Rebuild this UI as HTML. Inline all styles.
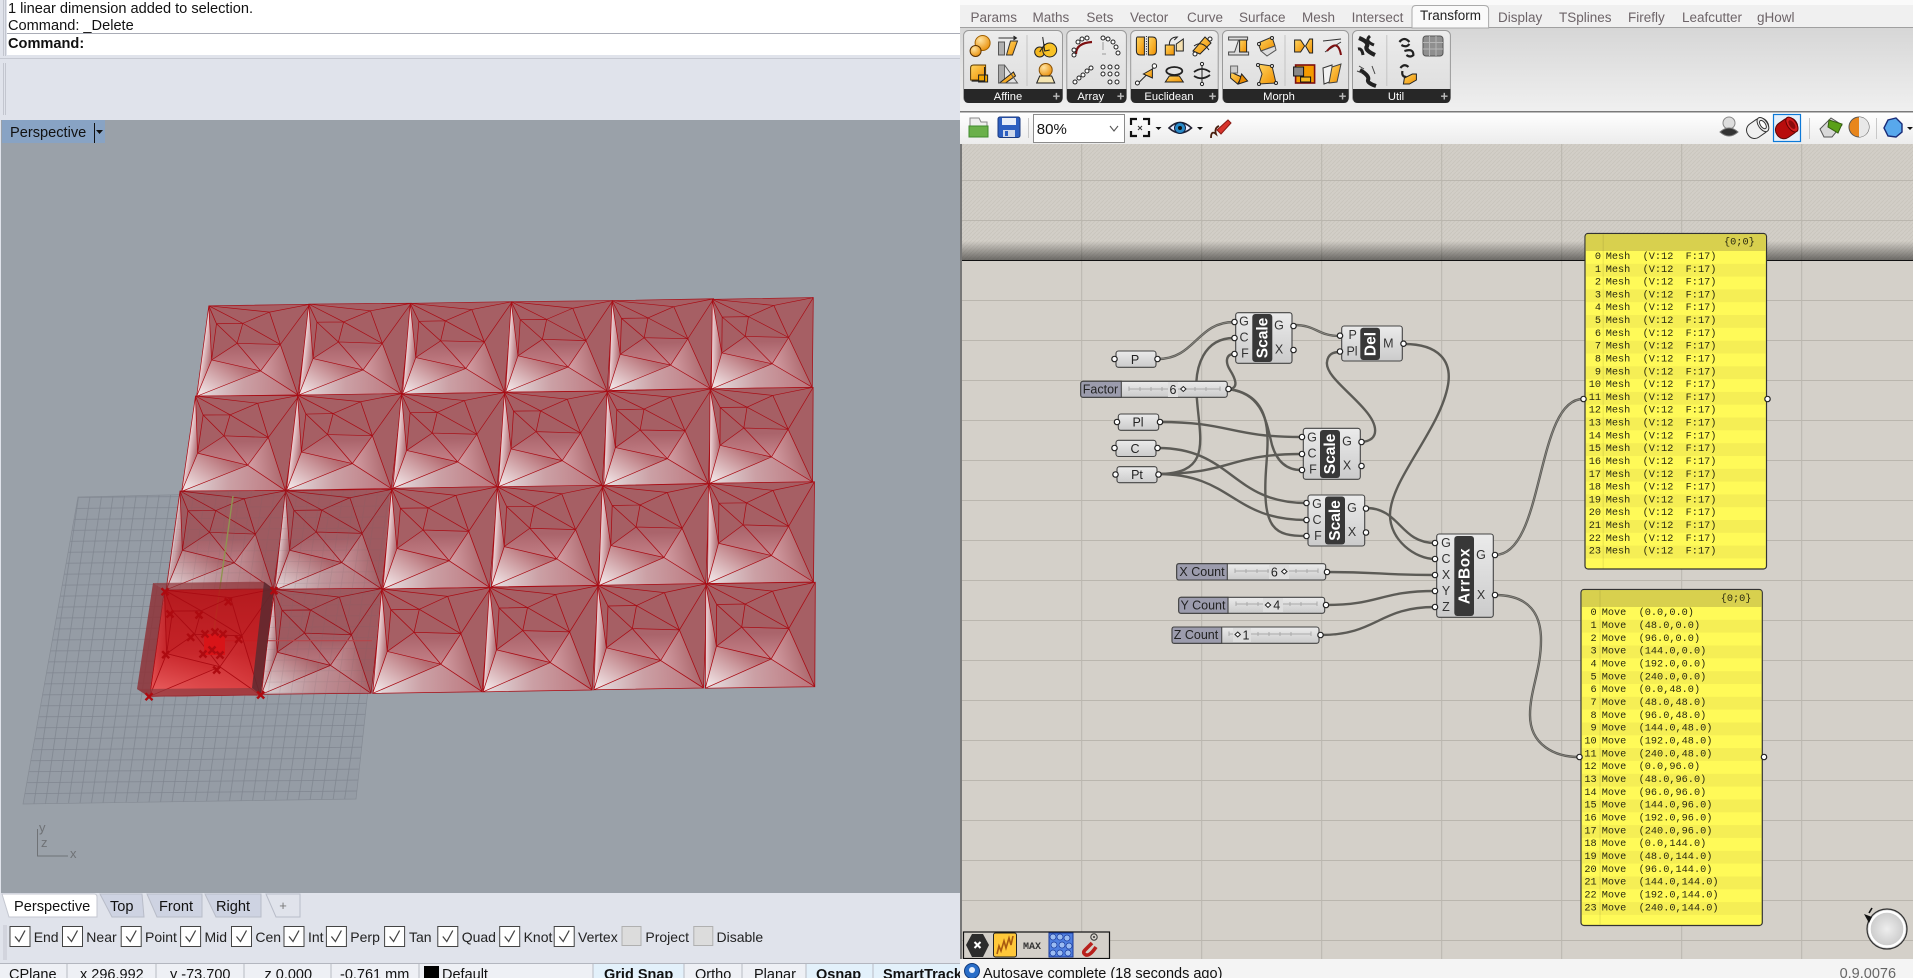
<!DOCTYPE html>
<html><head><meta charset="utf-8"><title>Rhino Grasshopper</title>
<style>
html,body{margin:0;padding:0;background:#e0e3eb;overflow:hidden;width:1913px;height:978px}
svg{position:absolute;left:0;top:0;display:block}
text{font-family:"Liberation Sans",Arial,sans-serif;white-space:pre}
.m{font-family:"Liberation Mono","Courier New",monospace;font-size:10.25px;fill:#2a2a10}
.ui{font-size:14.6px;fill:#111}
.tab{font-size:13.5px;fill:#6d6468}
.c{font-size:12.5px;fill:#333;text-anchor:middle}
.s{font-size:12.5px;fill:#222;text-anchor:middle}
.b{font-size:15.5px;font-weight:bold;fill:#fff;text-anchor:middle}
.f{font-size:11.2px;fill:#fff;text-anchor:middle}
.p{font-size:13px;fill:#bbb;font-weight:bold;text-anchor:middle}
.o{font-size:14px;fill:#222}
.st{font-size:14.5px;fill:#111}
.w{fill:none;stroke:#5c5b56;stroke-width:2.4}
.d{fill:none;stroke:#8f8d87;stroke-width:.7}
.i{stroke:#222;stroke-width:1}
</style></head><body>
<svg width="1913" height="978" viewBox="0 0 1913 978" xmlns="http://www.w3.org/2000/svg">
<defs>
<linearGradient id="g1" gradientUnits="userSpaceOnUse" x1="0" y1="100" x2="100" y2="92"><stop offset="0" stop-color="#e6e2e4"/><stop offset=".45" stop-color="#cba0a5"/><stop offset="1" stop-color="#bb757c"/></linearGradient>
<linearGradient id="g2" gradientUnits="userSpaceOnUse" x1="33" y1="62" x2="8" y2="98"><stop offset="0" stop-color="#b56c72"/><stop offset="1" stop-color="#eedfe1"/></linearGradient>
<linearGradient id="g3" gradientUnits="userSpaceOnUse" x1="33" y1="45" x2="33" y2="75"><stop offset="0" stop-color="#aa646b"/><stop offset="1" stop-color="#c68289"/></linearGradient>
<linearGradient id="g4" gradientUnits="userSpaceOnUse" x1="60" y1="48" x2="60" y2="74"><stop offset="0" stop-color="#aa646b"/><stop offset="1" stop-color="#c8878e"/></linearGradient>
<linearGradient id="g5" gradientUnits="userSpaceOnUse" x1="62" y1="70" x2="95" y2="62"><stop offset="0" stop-color="#d09aa0"/><stop offset="1" stop-color="#a65f64"/></linearGradient>
<linearGradient id="g6" gradientUnits="userSpaceOnUse" x1="0" y1="60" x2="10" y2="60"><stop offset="0" stop-color="#eed5d8"/><stop offset="1" stop-color="#aa646a"/></linearGradient>
<linearGradient id="sel" gradientUnits="userSpaceOnUse" x1="0" y1="590" x2="0" y2="696"><stop offset="0" stop-color="#b80e12" stop-opacity=".84"/><stop offset=".6" stop-color="#cc1418" stop-opacity=".8"/><stop offset="1" stop-color="#ea2e2e" stop-opacity=".72"/></linearGradient>
<linearGradient id="sh" x1="0" y1="0" x2="0" y2="1"><stop offset="0" stop-color="#000" stop-opacity="0"/><stop offset="1" stop-color="#000" stop-opacity=".48"/></linearGradient>
<linearGradient id="rb" x1="0" y1="0" x2="0" y2="1"><stop offset="0" stop-color="#d6d6d6"/><stop offset="1" stop-color="#f0f0f0"/></linearGradient>
<linearGradient id="tb" x1="0" y1="0" x2="0" y2="1"><stop offset="0" stop-color="#fff"/><stop offset="1" stop-color="#ececec"/></linearGradient>
<linearGradient id="pn" x1="0" y1="0" x2="0" y2="1"><stop offset="0" stop-color="#ececec"/><stop offset="1" stop-color="#dcdcdc"/></linearGradient>
<linearGradient id="cp" x1="0" y1="0" x2="0" y2="1"><stop offset="0" stop-color="#ebebeb"/><stop offset="1" stop-color="#cbcbcb"/></linearGradient>
<linearGradient id="or" x1="0" y1="0" x2="1" y2="1"><stop offset="0" stop-color="#ffd561"/><stop offset="1" stop-color="#ef8f00"/></linearGradient>
<radialGradient id="sp" cx=".35" cy=".3" r=".8"><stop offset="0" stop-color="#ffe3a0"/><stop offset="1" stop-color="#e88a00"/></radialGradient>
<radialGradient id="cm" cx=".5" cy=".5" r=".55"><stop offset="0" stop-color="#eee"/><stop offset="1" stop-color="#c2c2c2"/></radialGradient>
<pattern id="gr" patternUnits="userSpaceOnUse" width="11" height="11" patternTransform="matrix(1.045 -.008 -.1445 .997 78 497)">
<rect width="11" height="11" fill="#959ca5"/><path d="M0 .4H11M.4 0V11" stroke="#7f858f" stroke-width=".7" fill="none"/></pattern>
<pattern id="gr2" patternUnits="userSpaceOnUse" width="11" height="11" patternTransform="matrix(1.045 -.008 -.1445 .997 78 497)">
<path d="M0 .4H11M.4 0V11" stroke="#6b5f66" stroke-width=".7" fill="none"/></pattern>
<pattern id="ht" patternUnits="userSpaceOnUse" width="4" height="4"><rect width="4" height="4" fill="#d2cec7"/><path d="M0 4L4 0" stroke="#c8c4bc" stroke-width=".8"/></pattern>
<clipPath id="gc"><polygon points="78,497 390,490 356,799 23,804"/></clipPath>
<clipPath id="gm"><polygon points="180.7,491 390,490 371.7,693.3 260.7,695 274,590 165,590"/></clipPath>
<path id="l" fill="none" stroke="#a80c14" stroke-width=".72" d="M0 0H100V100H0ZM0 0L61 8L100 0M0 0L36 20L76 44M61 8L36 20M61 8L76 44M76 44L100 0M76 44L100 100M76 44L60 73M76 44L33 42M36 20L33 42M36 20H10L0 0M10 20L10 60M10 20L33 42M33 42L10 60M33 42L60 73M10 60L60 73M10 60L0 0M10 60L0 100L60 73L100 100"/>
<g id="c">
<rect width="100" height="100" fill="#a65f64"/>
<polygon points="0,100 60,73 100,100" fill="url(#g1)"/>
<polygon points="0,100 10,60 60,73" fill="url(#g2)"/>
<polygon points="10,60 33,42 60,73" fill="url(#g3)"/>
<polygon points="33,42 76,44 60,73" fill="url(#g4)"/>
<polygon points="60,73 76,44 100,100" fill="url(#g5)"/>
<polygon points="0,0 10,60 0,100" fill="url(#g6)"/>
<use href="#l"/>
</g>
<path id="x" d="M-3.5 -3.5L3.5 3.5M3.5 -3.5L-3.5 3.5" stroke="#ae0a10" stroke-width="2.4" fill="none"/>
<circle id="k" r="2.7" fill="#fff" stroke="#222" stroke-width="1.2"/>
<g id="chk"><rect width="20" height="20" fill="#fff" stroke="#444" stroke-width="1"/><path d="M5 10L9 15L15 4" stroke="#444" stroke-width="1.3" fill="none"/></g>
</defs>

<!-- left panel -->
<rect width="961" height="978" fill="#e0e3eb"/>
<rect x="7" y="0" width="953" height="55" fill="#fff"/>
<rect x="7" y="33" width="953" height="1" fill="#a9acb6"/>
<rect x="0" y="58" width="960" height="1" fill="#c6c9d2"/>
<path d="M3.5 0V56M5.5 0V56M3.5 63V115M5.5 63V115" stroke="#c3c6cf" fill="none"/>
<text x="8" y="13" class="ui">1 linear dimension added to selection.</text>
<text x="8" y="30" class="ui">Command: _Delete</text>
<text x="8" y="48" class="ui" font-weight="bold">Command:</text>

<!-- viewport -->
<rect x="1" y="120" width="959" height="773" fill="#9aa1a9"/>
<rect x="2" y="120" width="103" height="23" fill="#88a3c4"/>
<text x="10" y="137" class="ui">Perspective</text>
<rect x="94" y="123" width="1" height="20" fill="#111"/>
<polygon points="96,130 103,130 99.5,134" fill="#111"/>

<rect x="0" y="480" width="430" height="340" fill="url(#gr)" clip-path="url(#gc)"/>
<polygon points="78,497 390,490 356,799 23,804" fill="none" stroke="#858b94" stroke-width=".7"/>

<use href="#c" transform="matrix(1.0115 -.015 -.1215 .905 208.8 305.8)"/>
<use href="#c" transform="matrix(1.0255 -.0085 -.0985 .9085 308.7 304.1)"/>
<use href="#c" transform="matrix(1.02 -.0165 -.077 .9065 410.2 303.3)"/>
<use href="#c" transform="matrix(1.0165 -.0115 -.0565 .9045 511.2 301.7)"/>
<use href="#c" transform="matrix(1.017 -.0185 -.033 .8985 612 300.6)"/>
<use href="#c" transform="matrix(1.01 -.017 -.01 .897 712.3 299.3)"/>
<use href="#c" transform="matrix(1.038 -.0065 -.138 .9535 195.5 396)"/>
<use href="#c" transform="matrix(1.0485 -.017 -.1115 .95 297.6 395.2)"/>
<use href="#c" transform="matrix(1.0435 -.0165 -.0865 .9435 401.4 394)"/>
<use href="#c" transform="matrix(1.0385 -.0115 -.0615 .9455 504.4 392.3)"/>
<use href="#c" transform="matrix(1.0465 -.0235 -.0335 .9465 607 391)"/>
<use href="#c" transform="matrix(1.0315 -.0135 -.0055 .9465 710 388.7)"/>
<use href="#c" transform="matrix(1.0715 -.005 -.1385 .988 180 491)"/>
<use href="#c" transform="matrix(1.0715 -.0135 -.1085 .9965 285.4 490.6)"/>
<use href="#c" transform="matrix(1.067 -.0165 -.087 1.0065 391.5 488.3)"/>
<use href="#c" transform="matrix(1.0665 -.015 -.0605 1.001 497.2 486.7)"/>
<use href="#c" transform="matrix(1.0715 -.02 -.0355 1 602.2 485.7)"/>
<use href="#c" transform="matrix(1.06 -.015 -.01 1.002 708.5 483.3)"/>
<use href="#c" transform="matrix(1.1035 -.012 -.1465 1.062 164.4 590)"/>
<use href="#c" transform="matrix(1.0965 -.01 -.1195 1.05 273.4 589.3)"/>
<use href="#c" transform="matrix(1.0935 -.0165 -.0895 1.0435 381.7 589)"/>
<use href="#c" transform="matrix(1.0915 -.0185 -.0645 1.0455 489.5 587.3)"/>
<use href="#c" transform="matrix(1.0965 -.018 -.0395 1.045 597.8 585.3)"/>
<use href="#c" transform="matrix(1.095 -.015 -.005 1.045 705.8 583.7)"/>

<!-- grid seen through mesh -->
<g clip-path="url(#gm)"><rect x="150" y="480" width="250" height="220" fill="#50303a" opacity=".09"/><rect x="150" y="480" width="250" height="220" fill="url(#gr2)" opacity=".18"/></g>
<line x1="233" y1="496" x2="214" y2="630" stroke="#8f9350" stroke-width="1.4"/>
<line x1="220" y1="640.7" x2="372" y2="640.7" stroke="#b5454a" stroke-width="1.2"/>

<!-- selected box -->
<polygon points="165,590 274,589.3 260.7,695 149,696.7" fill="url(#sel)"/>
<use href="#l" transform="matrix(1.1035 -.012 -.1465 1.062 164.4 590)"/>
<polygon points="153,583 165,590 149,696.7 137,689" fill="#8e2f34" opacity=".82"/>
<polygon points="153,583 264,581.7 274,589.3 165,590" fill="#8e2f34" opacity=".68"/>
<polygon points="264,581.7 274,589.3 260.7,695 252,688" fill="#5c2a30" opacity=".85"/>
<polygon points="137,689 252,688 260.7,695 149,696.7" fill="#8e3a40" opacity=".72"/>
<rect x="204" y="634" width="21" height="21" fill="#d81418"/>
<use href="#x" x="205" y="634"/><use href="#x" x="215" y="632"/><use href="#x" x="223" y="634"/><use href="#x" x="203" y="654"/><use href="#x" x="212" y="650"/><use href="#x" x="220" y="655"/>
<use href="#x" x="165" y="591.7"/><use href="#x" x="260.7" y="695"/><use href="#x" x="149" y="696.7"/><use href="#x" x="274" y="590.7"/><use href="#x" x="228.3" y="601.7"/><use href="#x" x="170" y="614"/><use href="#x" x="199" y="615"/><use href="#x" x="190.7" y="637.3"/><use href="#x" x="238.7" y="639.3"/><use href="#x" x="165.7" y="654.7"/><use href="#x" x="216.7" y="670"/>

<!-- axis icon -->
<path d="M37.5 829V856H68" stroke="#6f7276" stroke-width="1" fill="none"/>
<text x="39" y="832" font-size="13" fill="#6f7276">y</text><text x="41" y="847" font-size="13" fill="#6f7276">z</text><text x="70" y="858" font-size="13" fill="#6f7276">x</text>

<!-- viewport tabs -->
<rect x="0" y="893" width="960" height="85" fill="#e0e3eb"/>
<path d="M2 894H94Q97 894 97 897V917H9Z" fill="#fff" stroke="#c4c7d0"/>
<path d="M100 894H142L144 917H112Z" fill="#ced3e2" stroke="#b8bcc8"/>
<path d="M147 894H202V917H157Z" fill="#ced3e2" stroke="#b8bcc8"/>
<path d="M205 894H261V917H216Z" fill="#ced3e2" stroke="#b8bcc8"/>
<path d="M266 894H300V917H276Z" fill="#e0e3eb" stroke="#b8bcc8"/>
<text x="14" y="911" class="ui">Perspective</text><text x="110" y="911" class="ui">Top</text><text x="159" y="911" class="ui">Front</text><text x="216" y="911" class="ui">Right</text>
<text x="283" y="910" font-size="13" fill="#777" text-anchor="middle">+</text>
<path d="M4 925V960M6 925V960" stroke="#c3c6cf"/>

<!-- osnaps -->
<use href="#chk" x="10" y="926.5"/><text x="33.7" y="942" class="o">End</text>
<use href="#chk" x="62.5" y="926.5"/><text x="86.3" y="942" class="o">Near</text>
<use href="#chk" x="121.2" y="926.5"/><text x="145" y="942" class="o">Point</text>
<use href="#chk" x="180.6" y="926.5"/><text x="204.5" y="942" class="o">Mid</text>
<use href="#chk" x="231.5" y="926.5"/><text x="255.4" y="942" class="o">Cen</text>
<use href="#chk" x="284" y="926.5"/><text x="308" y="942" class="o">Int</text>
<use href="#chk" x="326.4" y="926.5"/><text x="350.3" y="942" class="o">Perp</text>
<use href="#chk" x="384.6" y="926.5"/><text x="409" y="942" class="o">Tan</text>
<use href="#chk" x="437.8" y="926.5"/><text x="461.7" y="942" class="o">Quad</text>
<use href="#chk" x="499.7" y="926.5"/><text x="523.6" y="942" class="o">Knot</text>
<use href="#chk" x="554.2" y="926.5"/><text x="578" y="942" class="o">Vertex</text>
<rect x="622" y="926.5" width="19" height="19" fill="#dcdcdc" stroke="#b0b0b0"/><text x="645.4" y="942" class="o">Project</text>
<rect x="693.8" y="926.5" width="19" height="19" fill="#dcdcdc" stroke="#b0b0b0"/><text x="716.5" y="942" class="o">Disable</text>

<!-- status bar -->
<rect x="0" y="963" width="960" height="1" fill="#b3b6bf"/>
<rect x="0" y="964" width="960" height="14" fill="#eef0f5"/>
<rect x="593" y="964" width="91" height="14" fill="#e3f1fb"/><rect x="806" y="964" width="154" height="14" fill="#e3f1fb"/>
<path d="M67 964V978M156 964V978M244 964V978M331 964V978M419 964V978M593 964V978M684 964V978M742 964V978M806 964V978M873 964V978" stroke="#b8bbc4"/>
<text x="9" y="979" class="st">CPlane</text><text x="80" y="979" class="st">x 296.992</text><text x="170" y="979" class="st">y -73.700</text><text x="264.5" y="979" class="st">z 0.000</text><text x="340" y="979" class="st">-0.761 mm</text>
<rect x="424" y="966" width="15" height="12" fill="#000"/><text x="442" y="979" class="st">Default</text>
<text x="604" y="979" class="st" font-weight="bold">Grid Snap</text><text x="695" y="979" class="st">Ortho</text><text x="754" y="979" class="st">Planar</text><text x="816" y="979" class="st" font-weight="bold">Osnap</text><text x="883" y="979" class="st" font-weight="bold">SmartTrack</text>

<!-- right: tabs -->
<rect x="960" y="0" width="953" height="978" fill="#f0f0f0"/>
<rect x="960" y="0" width="953" height="5" fill="#fafafa"/>
<rect x="960" y="27" width="953" height="85" fill="url(#rb)"/>
<rect x="960" y="27" width="953" height="1" fill="#a0a0a0"/>
<rect x="960" y="111" width="953" height="1.5" fill="#7a7a7a"/>
<path d="M1412 28V9.5Q1412 5.5 1416 5.5H1484Q1488.6 5.5 1488.6 9.5V28Z" fill="#fafafa" stroke="#aaa"/>
<text x="970.5" y="22" class="tab">Params</text><text x="1032.5" y="22" class="tab">Maths</text><text x="1086.4" y="22" class="tab">Sets</text><text x="1130" y="22" class="tab">Vector</text><text x="1187" y="22" class="tab">Curve</text><text x="1239" y="22" class="tab">Surface</text><text x="1302" y="22" class="tab">Mesh</text><text x="1351.6" y="22" class="tab">Intersect</text>
<text x="1420" y="20" class="tab" style="fill:#222">Transform</text>
<text x="1498" y="22" class="tab">Display</text><text x="1559" y="22" class="tab">TSplines</text><text x="1628" y="22" class="tab">Firefly</text><text x="1682" y="22" class="tab">Leafcutter</text><text x="1757" y="22" class="tab">gHowl</text>

<!-- ribbon panels -->
<g stroke="#9a9a9a" fill="url(#pn)">
<rect x="963.6" y="30.5" width="98.9" height="72" rx="5"/><rect x="1066.8" y="30.5" width="59.6" height="72" rx="5"/><rect x="1130.7" y="30.5" width="87.5" height="72" rx="5"/><rect x="1222.5" y="30.5" width="126.1" height="72" rx="5"/><rect x="1352.5" y="30.5" width="97.9" height="72" rx="5"/>
</g>
<g fill="#272727">
<path d="M964 89H1062.5V98Q1062.5 103 1057.5 103H969Q964 103 964 98Z"/><path d="M1067 89H1126.4V98Q1126.4 103 1121.4 103H1072Q1067 103 1067 98Z"/><path d="M1131 89H1218.2V98Q1218.2 103 1213.2 103H1136Q1131 103 1131 98Z"/><path d="M1223 89H1348.6V98Q1348.6 103 1343.6 103H1228Q1223 103 1223 98Z"/><path d="M1353 89H1450.4V98Q1450.4 103 1445.4 103H1358Q1353 103 1353 98Z"/>
</g>
<text x="1008" y="100" class="f">Affine</text><text x="1090.7" y="100" class="f">Array</text><text x="1169" y="100" class="f">Euclidean</text><text x="1279" y="100" class="f">Morph</text><text x="1396" y="100" class="f">Util</text>
<text x="1056.4" y="100.5" class="p">+</text><text x="1120.7" y="100.5" class="p">+</text><text x="1212.5" y="100.5" class="p">+</text><text x="1342.5" y="100.5" class="p">+</text><text x="1444.3" y="100.5" class="p">+</text>
<path d="M1027 35V86M1285 35V86M1386.8 35V86" stroke="#c4c4c4"/>

<!-- ribbon icons -->
<g class="i">
<g transform="translate(979.6 46)"><circle cx="3" cy="-3" r="7.5" fill="url(#sp)" stroke="#a06000"/><circle cx="-4" cy="5" r="5.5" fill="url(#sp)" stroke="#5a3000"/></g>
<g transform="translate(1007.5 46)"><path d="M-9-4h6V9h-6z" fill="#b0b0b0" stroke="#555"/><path d="M-1 9L3-5H10L5 9Z" fill="url(#or)" stroke="#333"/><path d="M-9-8H9" stroke="#333" fill="none"/><path d="M6-10l3 2-3 2" fill="#333"/></g>
<g transform="translate(1045.7 46)"><circle cx="-6" cy="6" r="5" fill="#f5b820"/><circle cx="4" cy="4" r="7" fill="#f8c226"/><path d="M-3-9L-1 5L4 4M-6 6L-1-2" fill="none"/></g>
<g transform="translate(979.6 74)"><path d="M-9-6Q-9-9-6-9H6V6H-9Z" fill="url(#or)" stroke="#5a3a00"/><path d="M-1 1H8V8H-1Z" fill="#f5a800"/><path d="M5-7V7H-8" fill="none" stroke-width="1.2"/></g>
<g transform="translate(1007.5 74)"><path d="M-9 9V-9H-3V9Z" fill="#aaa" stroke="#666"/><path d="M-8 9L6-2L8 2L-2 9Z" fill="url(#or)"/><path d="M-9 9H10L-3-9" fill="none" stroke="#555"/></g>
<g transform="translate(1045.7 74)"><circle cy="-4" r="6.5" fill="url(#sp)" stroke="#8a5000"/><path d="M-9 9L-6 2H6L9 9Z" fill="#f5e5b0"/></g>
<g transform="translate(1083 46)"><path d="M-7 8Q-7-3 9-4" fill="none" stroke="#7d0f10" stroke-width="2.2"/><g fill="#fff"><circle cx="-9" cy="4" r="2"/><circle cx="-9" cy="9" r="2"/><circle cx="-5" cy="-4" r="2"/><circle cx="-1" cy="-7" r="2"/><circle cx="4" cy="-8" r="2"/></g></g>
<g transform="translate(1110 46)" fill="#fff"><circle cx="-7" cy="-8" r="2"/><circle cx="-2" cy="-7" r="2"/><circle cx="3" cy="-4" r="2"/><circle cx="6" cy="1" r="2"/><circle cx="8" cy="7" r="2"/><path d="M-8 8L-4 8M-7 -4L-7 4" fill="none" stroke="#999"/></g>
<g transform="translate(1083 74)" fill="#fff"><circle cx="-8" cy="8" r="2"/><circle cx="-4" cy="4" r="2"/><circle cx="0" cy="1" r="2"/><circle cx="4" cy="-3" r="2"/><circle cx="8" cy="-6" r="2"/></g>
<g transform="translate(1110 74)" fill="#fff"><circle cx="-7" cy="-7" r="2"/><circle cy="-7" r="2"/><circle cx="7" cy="-7" r="2"/><circle cx="-7" r="2"/><circle r="2"/><circle cx="7" r="2"/><circle cy="8" r="2"/><circle cx="7" cy="8" r="2"/></g>
<g transform="translate(1146.4 46)"><path d="M-9-9Q-10-9-10-6V5Q-10 9-6 9H-2V-9Z" fill="url(#or)"/><path d="M2-9H6Q10-9 10-5V5Q10 9 6 9H2Z" fill="url(#or)"/><path d="M0-10V10" stroke-dasharray="1 1.5" fill="none"/></g>
<g transform="translate(1174.3 46)"><path d="M-9-1H0V9H-9Z" fill="url(#or)"/><path d="M-5-1Q-5-9 3-9L0-6" fill="none"/><path d="M2-2L9-7V5H2Z" fill="#f5e0b0"/></g>
<g transform="translate(1202 46)"><path d="M-9 5L3-9L9-3L-2 8Z" fill="url(#or)"/><circle cx="-7" cy="8" r="2" fill="#fff"/><circle cx="8" cy="-7" r="2" fill="#fff"/><path d="M-8 0Q0-6 7 4" fill="none"/></g>
<g transform="translate(1146.4 74)"><path d="M-8 9L8-7" fill="none"/><path d="M-3 0L6-5V4Z" fill="url(#or)"/><circle cx="-9" cy="9" r="2" fill="#fff"/><circle cx="8" cy="-8" r="2.2" fill="#fff"/></g>
<g transform="translate(1174.3 74)"><path d="M-9 8L-5 2H5L9 8Z" fill="url(#or)"/><ellipse cy="-3" rx="8" ry="4" fill="none" stroke-width="1.8"/></g>
<g transform="translate(1202 74)"><path d="M0-10V10" fill="none"/><path d="M-8-2Q0-8 8-2M-8 2Q0 7 8 1" fill="none" stroke-width="1.8"/><circle cy="-10" r="1.6" fill="#fff"/><circle cy="10" r="1.6" fill="#fff"/></g>
<g transform="translate(1238.6 46)"><path d="M-10-9H9V-6H5V6H10V9H-10V6H-4L0-6H-10Z" fill="#ddd" stroke="#444"/><path d="M1-6H8V6H1Z" fill="url(#or)"/></g>
<g transform="translate(1267 46)"><path d="M-9-3L5-9L8 0L-6 5Z" fill="url(#or)" stroke="#333"/><path d="M-6 5L0 10L9 4L8 0Z" fill="#ddd" stroke="#555"/><circle cx="5" cy="-8" r="1.5" fill="#fff"/><circle cx="-8" cy="-2" r="1.5" fill="#fff"/></g>
<g transform="translate(1303.6 46)"><path d="M-9-6V6H-3L1 0L-3-6Z" fill="url(#or)"/><path d="M2 0L6-7H9V7H6Z" fill="url(#or)"/></g>
<g transform="translate(1332 46)"><path d="M-9-5L9-7M-7 6L9-4" fill="none" stroke="#333"/><path d="M-5 5Q6-8 9 9" fill="none" stroke="#7d0f10" stroke-width="2"/></g>
<g transform="translate(1238.6 74)"><path d="M-8-2L3 3L-1 10L-8 4Z" fill="url(#or)"/><path d="M-8-8H-1V-1H-8Z" fill="#ccc" stroke="#666"/><path d="M3 0L9 7L0 10Z" fill="#e88a00"/></g>
<g transform="translate(1267 74)"><path d="M-9-10L5-8L9 9L-8 10L-5 0Z" fill="url(#or)" stroke="#333"/><circle cx="-9" cy="-9" r="1.5" fill="#fff"/><circle cx="5" cy="-8" r="1.5" fill="#fff"/><circle cx="9" cy="9" r="1.5" fill="#fff"/><circle cx="-8" cy="10" r="1.5" fill="#fff"/></g>
<g transform="translate(1303.6 74)"><rect x="-8" y="-9" width="19" height="18" fill="#f59a00" stroke="#7d0f10" stroke-width="1.6"/><rect x="-10" y="-7" width="10" height="9" fill="#888" stroke="#111"/><rect x="-3" y="3" width="10" height="5" fill="#f5b820" stroke="#111"/></g>
<g transform="translate(1332 74)"><path d="M-9-6L0-9V7L-8 10Z" fill="#f2f2f2" stroke="#333"/><path d="M0-7L9-10L5 8L-3 9Z" fill="url(#or)" stroke="#444"/></g>
<g transform="translate(1367 46)"><path d="M-8-8Q2-4 0 0Q-3 4 8 9" fill="none" stroke="#222" stroke-width="4.2"/><path d="M3-10Q-3-5 7-1" fill="none" stroke="#222" stroke-width="3"/><path d="M-9 3Q-5 2-4 9" fill="none" stroke="#222" stroke-width="3"/></g>
<g transform="translate(1367 74)"><path d="M-7-4Q3 2 1 6Q0 9 9 12" fill="none" stroke="#222" stroke-width="4"/><path d="M-8-8l5 3M-10-3l5 2M5-8l3 8" stroke="#444" fill="none"/></g>
<g transform="translate(1406.4 46)"><path d="M-7-4Q-2-10 3-4M3-2Q0 2-5-1M-2 5Q7 2 7 9Q4 12 0 9" fill="none" stroke-width="2.2"/></g>
<rect x="1423" y="36" width="20" height="20" rx="3" fill="#8f8f8f" stroke="#555"/><path d="M1423 42.5h20M1423 49h20M1429.500 36v20M1436 36v20" stroke="#b5b5b5" fill="none"/>
<g transform="translate(1406.4 74)"><path d="M-6-6Q-2-11 2-7M-4-3Q-5 3 0 3" fill="none" stroke-width="2.2"/><path d="M-2 4L6 0H10V6L3 10H-3Z" fill="url(#or)"/></g>
</g>

<!-- toolbar -->
<rect x="960" y="112.5" width="953" height="31.5" fill="url(#tb)"/>
<path d="M970 137V118H979L981 122H987V137Z" fill="#eee" stroke="#888"/><path d="M969 137L969 126H988V137Z" fill="#6ab04a" stroke="#3f8a2c"/>
<rect x="998" y="117" width="22" height="20.5" rx="2" fill="#2d5fc0" stroke="#1a3a80"/><rect x="1002" y="118" width="14" height="7" fill="#e9eef8"/><rect x="1003" y="130" width="12" height="7" fill="#cfd8ea"/><rect x="1005" y="131" width="3" height="5" fill="#2d5fc0"/>
<rect x="1028" y="118" width="1" height="20" fill="#c8c8c8"/>
<rect x="1033.5" y="114.5" width="91" height="28" fill="#fff" stroke="#8c8c8c"/>
<text x="1036.8" y="134" font-size="15" fill="#111">80%</text>
<path d="M1110 126L1114 131L1118 126" fill="none" stroke="#555" stroke-width="1.1"/>
<path d="M1131 125V119H1137M1143 119H1149V125M1149 131V136H1143M1137 136H1131V131" fill="none" stroke="#111" stroke-width="2.2"/><path d="M1138 126l4 4M1142 126l-4 4" stroke="#333"/>
<polygon points="1155.500,127 1161.500,127 1158.500,130" fill="#111"/>
<path d="M1169 128Q1180 117 1191.500 128Q1180 138 1169 128Z" fill="#eef" stroke="#223" stroke-width="1.6"/><circle cx="1180" cy="128" r="5.5" fill="#2a8ac8" stroke="#124"/><circle cx="1180" cy="128" r="2" fill="#111"/>
<polygon points="1197,127 1203,127 1200,130" fill="#111"/>
<path d="M1211 138Q1211 130 1216 134Q1214 128 1219 126" fill="none" stroke="#4a2010" stroke-width="1.8"/><path d="M1217 130L1228 120L1231 123L1221 134Z" fill="#d8342c" stroke="#8a1a14"/>
<circle cx="1729" cy="123" r="6" fill="#ddd" stroke="#888"/><path d="M1720 132Q1729 124 1738 132Q1729 140 1720 132Z" fill="#333" stroke="#777"/>
<g transform="translate(1758 128) rotate(-35)"><rect x="-12" y="-8" width="23" height="16" rx="7.500" fill="#f0f0f0" stroke="#333"/><ellipse cx="6" cy="0" rx="4.500" ry="8" fill="#eee" stroke="#333"/><ellipse cx="6" cy="0" rx="2.500" ry="4.800" fill="#fff" stroke="#333"/></g>
<rect x="1773.5" y="114.5" width="27" height="27" fill="#e6f0fb" stroke="#0c79d8" stroke-width="1.2"/>
<g transform="translate(1787 128) rotate(-35)"><rect x="-12" y="-8.500" width="23" height="17" rx="8" fill="#b80c0c" stroke="#5a0a0a"/><ellipse cx="6" cy="0" rx="4.500" ry="8.500" fill="#d42020" stroke="#600"/><ellipse cx="6" cy="0" rx="2.500" ry="5" fill="#8a0c0c"/></g>
<rect x="1809" y="118" width="1" height="21" fill="#c8c8c8"/>
<path d="M1820 129L1831 118L1842 125L1832 137L1824 137Z" fill="#d8d8d8" stroke="#555"/><path d="M1829 120L1842 124L1838 133L1828 127Z" fill="#5aa018" stroke="#355f10"/>
<circle cx="1859" cy="127" r="10" fill="#e8861c" stroke="#555"/><path d="M1859 117A10 10 0 0 1 1859 137Z" fill="#e8e8e8"/>
<rect x="1876" y="118" width="1" height="21" fill="#c8c8c8"/>
<path d="M1884 128L1888 120L1896 118L1902 124L1902 132L1896 137L1888 136Z" fill="#58a8ec" stroke="#1a2c78" stroke-width="1.4"/>
<polygon points="1907,127 1913,127 1910,130" fill="#111"/>

<!-- canvas -->
<rect x="962" y="144" width="951" height="116" fill="url(#ht)"/>
<rect x="962" y="260" width="951" height="699" fill="#d4d0c9"/>
<path d="M1081.7 144V959M1201.7 144V959M1321.7 144V959M1441.7 144V959M1561.7 144V959M1681.7 144V959M1801.7 144V959" stroke="#bab6ae" fill="none"/>
<path d="M962 180.5H1913M962 220.5H1913M962 300.5H1913M962 340.5H1913M962 380.5H1913M962 420.500H1913M962 460.5H1913M962 500.5H1913M962 540.5H1913M962 580.5H1913M962 620.5H1913M962 660.5H1913M962 700.5H1913M962 740.5H1913M962 780.5H1913M962 820.5H1913M962 860.5H1913M962 900.5H1913M962 940.5H1913" stroke="#bab6ae" fill="none"/>
<rect x="962" y="241" width="951" height="19" fill="url(#sh)"/>
<rect x="962" y="260" width="951" height="1" fill="#111"/>
<rect x="960" y="144" width="2" height="815" fill="#777"/>

<!-- wires -->
<path class="w" d="M1158 359C1195 359 1197 322 1234 322"/><path class="d" d="M1158 359C1195 359 1197 322 1234 322"/>
<path class="w" d="M1158 474C1212 474 1200 440 1197 400C1193 365 1205 338 1234 338"/>
<path class="w" d="M1228 389C1240 389 1235 378 1230 370C1225 362 1226 354 1234 354"/>
<path class="w" d="M1228 389C1262 393 1266 420 1272 445C1278 465 1290 470 1301 470"/>
<path class="w" d="M1228 389C1275 395 1268 440 1266 470C1262 530 1275 536 1306 536"/>
<path class="w" d="M1160 422C1230 422 1230 437 1301 437"/>
<path class="w" d="M1158 448C1232 448 1232 503 1306 503"/>
<path class="w" d="M1158 474C1230 474 1230 454 1301 454"/>
<path class="w" d="M1158 474C1232 474 1232 520 1306 520"/>
<path class="w" d="M1294 325C1317 325 1317 336 1340 336"/><path class="d" d="M1294 325C1317 325 1317 336 1340 336"/>
<path class="w" d="M1362 442C1380 440 1378 425 1365 410C1350 392 1325 375 1327 362C1328 354 1333 352 1340 352"/>
<path class="w" d="M1404 344C1440 344 1452 362 1448 385C1440 430 1390 480 1390 515C1390 540 1415 559 1435 559"/>
<path class="w" d="M1366 508C1400 508 1400 543 1435 543"/>
<path class="w" d="M1327 572C1380 572 1380 575 1435 575"/>
<path class="w" d="M1326 605C1380 605 1380 591 1435 591"/>
<path class="w" d="M1320 635C1378 635 1378 607 1435 607"/>
<path class="w" d="M1495 555C1545 555 1535 399 1583 399"/><path class="d" d="M1495 555C1545 555 1535 399 1583 399"/>
<path class="w" d="M1495 595C1530 595 1541 615 1541 640C1541 670 1530 690 1530 715C1530 745 1555 757 1579 757"/><path class="d" d="M1495 595C1530 595 1541 615 1541 640C1541 670 1530 690 1530 715C1530 745 1555 757 1579 757"/>

<!-- components -->
<g fill="url(#cp)" stroke="#444" stroke-width="1.1">
<rect x="1235.7" y="312.7" width="56.3" height="50.6" rx="2.5"/>
<rect x="1303.3" y="428.3" width="57" height="51" rx="2.5"/>
<rect x="1308" y="495" width="56.7" height="51" rx="2.5"/>
<rect x="1341.7" y="326" width="60.6" height="35" rx="2.5"/>
<rect x="1436.7" y="534" width="56.6" height="83.3" rx="2.5"/>
<rect x="1116" y="351" width="40" height="16.3" rx="2.5"/>
<rect x="1118.3" y="414" width="40.4" height="16.3" rx="2.5"/>
<rect x="1116" y="440.3" width="40" height="16.2" rx="2.5"/>
<rect x="1117" y="466.7" width="40" height="16" rx="2.5"/>
<rect x="1080.7" y="381.3" width="146.6" height="16" rx="2.5"/>
<rect x="1176.7" y="563.7" width="149" height="16.3" rx="2.5"/>
<rect x="1178.7" y="597.3" width="146" height="16" rx="2.5"/>
<rect x="1172" y="627" width="147" height="16.3" rx="2.5"/>
</g>
<g fill="#9c9cad" stroke="#444" stroke-width="1.1">
<path d="M1121.3 381.3H1083Q1080.7 381.3 1080.7 384V394.6Q1080.7 397.3 1083 397.3H1121.3Z"/>
<path d="M1227.3 563.7H1179Q1176.7 563.7 1176.7 566V577.5Q1176.7 580 1179 580H1227.3Z"/>
<path d="M1228 597.3H1181Q1178.7 597.3 1178.7 600V610.6Q1178.7 613.3 1181 613.3H1228Z"/>
<path d="M1221.7 627H1174Q1172 627 1172 629.5V641Q1172 643.3 1174 643.3H1221.7Z"/>
</g>
<g fill="#383838">
<rect x="1252.3" y="314" width="20" height="48" rx="3"/><rect x="1320" y="430" width="20" height="48" rx="3"/><rect x="1325" y="496.5" width="20" height="48" rx="3"/><rect x="1360.3" y="327.7" width="19.7" height="32.3" rx="3"/><rect x="1454.3" y="536" width="19.7" height="80" rx="3"/>
</g>
<text transform="translate(1267.5 338) rotate(-90)" class="b">Scale</text>
<text transform="translate(1335 454) rotate(-90)" class="b">Scale</text>
<text transform="translate(1340 520.5) rotate(-90)" class="b">Scale</text>
<text transform="translate(1375.5 344) rotate(-90)" class="b">Del</text>
<text transform="translate(1469.5 576) rotate(-90)" class="b" style="letter-spacing:.6px">ArrBox</text>

<text x="1244" y="325.5" class="c">G</text><text x="1244" y="341.5" class="c">C</text><text x="1245" y="357.5" class="c">F</text><text x="1279" y="329.5" class="c">G</text><text x="1279" y="353.5" class="c">X</text>
<text x="1312" y="441.5" class="c">G</text><text x="1312" y="457.5" class="c">C</text><text x="1313" y="473.5" class="c">F</text><text x="1347" y="445.5" class="c">G</text><text x="1347" y="469.5" class="c">X</text>
<text x="1317" y="508" class="c">G</text><text x="1317" y="524" class="c">C</text><text x="1318" y="540" class="c">F</text><text x="1352" y="512" class="c">G</text><text x="1352" y="536" class="c">X</text>
<text x="1352.7" y="339" class="c">P</text><text x="1352" y="355.5" class="c">Pl</text><text x="1388.3" y="347.5" class="c">M</text>
<text x="1446" y="547" class="c">G</text><text x="1446" y="563" class="c">C</text><text x="1446" y="579" class="c">X</text><text x="1446" y="595" class="c">Y</text><text x="1446" y="611" class="c">Z</text><text x="1481" y="559" class="c">G</text><text x="1481" y="599" class="c">X</text>

<text x="1135" y="364" class="s">P</text><text x="1138" y="426.5" class="s">Pl</text><text x="1135" y="453" class="s">C</text><text x="1137" y="479" class="s">Pt</text>
<text x="1100.5" y="393.5" class="s">Factor</text><text x="1202" y="576" class="s">X Count</text><text x="1203" y="609.5" class="s">Y Count</text><text x="1196" y="639" class="s">Z Count</text>

<path d="M1129 389H1220M1129 386.5V391M1140 387V391M1151 387V391M1162 387V391M1195 387V391M1206 387V391M1220 386.5V391" stroke="#aaa" fill="none"/>
<path d="M1235 571H1318M1235 568.5V573M1246 569V573M1257 569V573M1268 569V573M1296 569V573M1307 569V573M1318 568.5V573" stroke="#aaa" fill="none"/>
<path d="M1236 604H1317M1236 601.5V606M1247 602V606M1258 602V606M1290 602V606M1301 602V606M1317 601.5V606" stroke="#aaa" fill="none"/>
<path d="M1229 634H1311M1229 631.5V636M1258 632V636M1269 632V636M1280 632V636M1291 632V636M1311 631.5V636" stroke="#aaa" fill="none"/>
<rect x="1168" y="382" width="10" height="15" fill="#dedede"/><text x="1173" y="394" class="s">6</text>
<rect x="1269" y="565" width="20" height="14" fill="#dedede"/><text x="1274.3" y="576.5" class="s">6</text>
<rect x="1263" y="598" width="20" height="14" fill="#dedede"/><text x="1276.7" y="609.5" class="s">4</text>
<rect x="1233" y="628" width="18" height="14" fill="#dedede"/><text x="1246" y="639.5" class="s">1</text>
<g fill="#fff" stroke="#222"><polygon points="1183.3,386.5 1186,389 1183.3,391.5 1180.6,389"/><polygon points="1284.3,569 1287,571.5 1284.3,574 1281.6,571.5"/><polygon points="1268,602.5 1270.7,605 1268,607.5 1265.3,605"/><polygon points="1237.7,632 1240.4,634.5 1237.7,637 1235,634.5"/></g>

<!-- grips -->
<use href="#k" x="1234.5" y="322"/><use href="#k" x="1234.5" y="338"/><use href="#k" x="1234.5" y="354"/><use href="#k" x="1293.5" y="326"/><use href="#k" x="1293.5" y="350"/>
<use href="#k" x="1302" y="437"/><use href="#k" x="1302" y="454"/><use href="#k" x="1302" y="470"/><use href="#k" x="1361.5" y="442"/><use href="#k" x="1361.5" y="466"/>
<use href="#k" x="1306.5" y="503"/><use href="#k" x="1306.5" y="520"/><use href="#k" x="1306.5" y="536"/><use href="#k" x="1366" y="508.5"/><use href="#k" x="1366" y="532.5"/>
<use href="#k" x="1340" y="335.7"/><use href="#k" x="1340" y="351.5"/><use href="#k" x="1403.5" y="343.7"/>
<use href="#k" x="1435" y="543"/><use href="#k" x="1435" y="559"/><use href="#k" x="1435" y="575"/><use href="#k" x="1435" y="591"/><use href="#k" x="1435" y="607"/><use href="#k" x="1495" y="555"/><use href="#k" x="1495" y="595"/>
<use href="#k" x="1114.5" y="359"/><use href="#k" x="1157.5" y="359"/><use href="#k" x="1117" y="422"/><use href="#k" x="1160" y="422"/><use href="#k" x="1114.5" y="448"/><use href="#k" x="1157.5" y="448"/><use href="#k" x="1115.5" y="474.5"/><use href="#k" x="1158.5" y="474.5"/>
<use href="#k" x="1228.5" y="389"/><use href="#k" x="1327" y="572"/><use href="#k" x="1326" y="605"/><use href="#k" x="1320.5" y="635"/>

<!-- panel 1 -->
<rect x="1585" y="233.5" width="181.5" height="335.5" rx="3" fill="#fffa58" stroke="#333" stroke-width="1.2"/>
<rect x="1586" y="234.5" width="179.5" height="16.5" fill="#d8d04e"/>
<g fill="#f5ee55"><rect x="1586" y="263.8" width="179.5" height="12.8"/><rect x="1586" y="289.4" width="179.5" height="12.8"/><rect x="1586" y="315" width="179.5" height="12.8"/><rect x="1586" y="340.7" width="179.5" height="12.8"/><rect x="1586" y="366.3" width="179.5" height="12.8"/><rect x="1586" y="391.9" width="179.5" height="12.8"/><rect x="1586" y="417.5" width="179.5" height="12.8"/><rect x="1586" y="443.2" width="179.5" height="12.8"/><rect x="1586" y="468.8" width="179.5" height="12.8"/><rect x="1586" y="494.4" width="179.5" height="12.8"/><rect x="1586" y="520" width="179.5" height="12.8"/><rect x="1586" y="545.6" width="179.5" height="12.8"/></g>
<rect x="1602.5" y="234.5" width="1.5" height="334" fill="#000" opacity=".06"/>
<text x="1724" y="244.3" class="m">{0;0}</text>
<text x="1601" y="259" text-anchor="end" class="m">0</text><text x="1605.7" y="259" class="m">Mesh  (V:12  F:17)</text>
<text x="1601" y="271.8" text-anchor="end" class="m">1</text><text x="1605.7" y="271.8" class="m">Mesh  (V:12  F:17)</text>
<text x="1601" y="284.6" text-anchor="end" class="m">2</text><text x="1605.7" y="284.6" class="m">Mesh  (V:12  F:17)</text>
<text x="1601" y="297.4" text-anchor="end" class="m">3</text><text x="1605.7" y="297.4" class="m">Mesh  (V:12  F:17)</text>
<text x="1601" y="310.2" text-anchor="end" class="m">4</text><text x="1605.7" y="310.2" class="m">Mesh  (V:12  F:17)</text>
<text x="1601" y="323.1" text-anchor="end" class="m">5</text><text x="1605.7" y="323.1" class="m">Mesh  (V:12  F:17)</text>
<text x="1601" y="335.9" text-anchor="end" class="m">6</text><text x="1605.7" y="335.9" class="m">Mesh  (V:12  F:17)</text>
<text x="1601" y="348.7" text-anchor="end" class="m">7</text><text x="1605.7" y="348.7" class="m">Mesh  (V:12  F:17)</text>
<text x="1601" y="361.5" text-anchor="end" class="m">8</text><text x="1605.7" y="361.5" class="m">Mesh  (V:12  F:17)</text>
<text x="1601" y="374.3" text-anchor="end" class="m">9</text><text x="1605.7" y="374.3" class="m">Mesh  (V:12  F:17)</text>
<text x="1601" y="387.1" text-anchor="end" class="m">10</text><text x="1605.7" y="387.1" class="m">Mesh  (V:12  F:17)</text>
<text x="1601" y="399.9" text-anchor="end" class="m">11</text><text x="1605.7" y="399.9" class="m">Mesh  (V:12  F:17)</text>
<text x="1601" y="412.7" text-anchor="end" class="m">12</text><text x="1605.7" y="412.7" class="m">Mesh  (V:12  F:17)</text>
<text x="1601" y="425.5" text-anchor="end" class="m">13</text><text x="1605.7" y="425.5" class="m">Mesh  (V:12  F:17)</text>
<text x="1601" y="438.3" text-anchor="end" class="m">14</text><text x="1605.7" y="438.3" class="m">Mesh  (V:12  F:17)</text>
<text x="1601" y="451.2" text-anchor="end" class="m">15</text><text x="1605.7" y="451.2" class="m">Mesh  (V:12  F:17)</text>
<text x="1601" y="464" text-anchor="end" class="m">16</text><text x="1605.7" y="464" class="m">Mesh  (V:12  F:17)</text>
<text x="1601" y="476.8" text-anchor="end" class="m">17</text><text x="1605.7" y="476.8" class="m">Mesh  (V:12  F:17)</text>
<text x="1601" y="489.6" text-anchor="end" class="m">18</text><text x="1605.7" y="489.6" class="m">Mesh  (V:12  F:17)</text>
<text x="1601" y="502.4" text-anchor="end" class="m">19</text><text x="1605.7" y="502.4" class="m">Mesh  (V:12  F:17)</text>
<text x="1601" y="515.2" text-anchor="end" class="m">20</text><text x="1605.7" y="515.2" class="m">Mesh  (V:12  F:17)</text>
<text x="1601" y="528" text-anchor="end" class="m">21</text><text x="1605.7" y="528" class="m">Mesh  (V:12  F:17)</text>
<text x="1601" y="540.8" text-anchor="end" class="m">22</text><text x="1605.7" y="540.8" class="m">Mesh  (V:12  F:17)</text>
<text x="1601" y="553.6" text-anchor="end" class="m">23</text><text x="1605.7" y="553.6" class="m">Mesh  (V:12  F:17)</text>
<use href="#k" x="1583.5" y="399"/><use href="#k" x="1767.5" y="399"/>

<!-- panel 2 -->
<rect x="1581" y="589.5" width="181.3" height="336" rx="3" fill="#fffa58" stroke="#333" stroke-width="1.2"/>
<rect x="1582" y="590.5" width="179.3" height="16.5" fill="#d8d04e"/>
<g fill="#f5ee55"><rect x="1582" y="619.8" width="179.3" height="12.8"/><rect x="1582" y="645.5" width="179.3" height="12.8"/><rect x="1582" y="671.2" width="179.3" height="12.8"/><rect x="1582" y="696.8" width="179.3" height="12.8"/><rect x="1582" y="722.5" width="179.3" height="12.8"/><rect x="1582" y="748.1" width="179.3" height="12.8"/><rect x="1582" y="773.8" width="179.3" height="12.8"/><rect x="1582" y="799.5" width="179.3" height="12.8"/><rect x="1582" y="825.1" width="179.3" height="12.8"/><rect x="1582" y="850.8" width="179.3" height="12.8"/><rect x="1582" y="876.5" width="179.3" height="12.8"/><rect x="1582" y="902.1" width="179.3" height="12.8"/></g>
<rect x="1599.3" y="590.5" width="1.5" height="334" fill="#000" opacity=".06"/>
<text x="1720.7" y="600.8" class="m">{0;0}</text>
<text x="1596.7" y="615.2" text-anchor="end" class="m">0</text><text x="1601.7" y="615.2" class="m">Move  (0.0,0.0)</text>
<text x="1596.7" y="628" text-anchor="end" class="m">1</text><text x="1601.7" y="628" class="m">Move  (48.0,0.0)</text>
<text x="1596.7" y="640.9" text-anchor="end" class="m">2</text><text x="1601.7" y="640.9" class="m">Move  (96.0,0.0)</text>
<text x="1596.7" y="653.7" text-anchor="end" class="m">3</text><text x="1601.7" y="653.7" class="m">Move  (144.0,0.0)</text>
<text x="1596.7" y="666.5" text-anchor="end" class="m">4</text><text x="1601.7" y="666.5" class="m">Move  (192.0,0.0)</text>
<text x="1596.7" y="679.4" text-anchor="end" class="m">5</text><text x="1601.7" y="679.4" class="m">Move  (240.0,0.0)</text>
<text x="1596.7" y="692.2" text-anchor="end" class="m">6</text><text x="1601.7" y="692.2" class="m">Move  (0.0,48.0)</text>
<text x="1596.7" y="705" text-anchor="end" class="m">7</text><text x="1601.7" y="705" class="m">Move  (48.0,48.0)</text>
<text x="1596.7" y="717.8" text-anchor="end" class="m">8</text><text x="1601.7" y="717.8" class="m">Move  (96.0,48.0)</text>
<text x="1596.7" y="730.7" text-anchor="end" class="m">9</text><text x="1601.7" y="730.7" class="m">Move  (144.0,48.0)</text>
<text x="1596.7" y="743.5" text-anchor="end" class="m">10</text><text x="1601.7" y="743.5" class="m">Move  (192.0,48.0)</text>
<text x="1596.7" y="756.3" text-anchor="end" class="m">11</text><text x="1601.7" y="756.3" class="m">Move  (240.0,48.0)</text>
<text x="1596.7" y="769.2" text-anchor="end" class="m">12</text><text x="1601.7" y="769.2" class="m">Move  (0.0,96.0)</text>
<text x="1596.7" y="782" text-anchor="end" class="m">13</text><text x="1601.7" y="782" class="m">Move  (48.0,96.0)</text>
<text x="1596.7" y="794.8" text-anchor="end" class="m">14</text><text x="1601.7" y="794.8" class="m">Move  (96.0,96.0)</text>
<text x="1596.7" y="807.6" text-anchor="end" class="m">15</text><text x="1601.7" y="807.6" class="m">Move  (144.0,96.0)</text>
<text x="1596.7" y="820.5" text-anchor="end" class="m">16</text><text x="1601.7" y="820.5" class="m">Move  (192.0,96.0)</text>
<text x="1596.7" y="833.3" text-anchor="end" class="m">17</text><text x="1601.7" y="833.3" class="m">Move  (240.0,96.0)</text>
<text x="1596.7" y="846.1" text-anchor="end" class="m">18</text><text x="1601.7" y="846.1" class="m">Move  (0.0,144.0)</text>
<text x="1596.7" y="859" text-anchor="end" class="m">19</text><text x="1601.7" y="859" class="m">Move  (48.0,144.0)</text>
<text x="1596.7" y="871.8" text-anchor="end" class="m">20</text><text x="1601.7" y="871.8" class="m">Move  (96.0,144.0)</text>
<text x="1596.7" y="884.6" text-anchor="end" class="m">21</text><text x="1601.7" y="884.6" class="m">Move  (144.0,144.0)</text>
<text x="1596.7" y="897.5" text-anchor="end" class="m">22</text><text x="1601.7" y="897.5" class="m">Move  (192.0,144.0)</text>
<text x="1596.7" y="910.3" text-anchor="end" class="m">23</text><text x="1601.7" y="910.3" class="m">Move  (240.0,144.0)</text>
<use href="#k" x="1579.5" y="757"/><use href="#k" x="1764" y="757"/>

<!-- compass -->
<circle cx="1887" cy="929" r="20" fill="url(#cm)" stroke="#333" stroke-width="1.2"/>
<circle cx="1887" cy="929" r="17.5" fill="none" stroke="#fff" stroke-width="2.4"/>
<path d="M1864 914L1872 917L1869 923Z" fill="#111"/><path d="M1869 913L1872 908" stroke="#111" stroke-width="1.6"/>

<!-- widget bar -->
<rect x="963.5" y="932" width="146" height="26.5" fill="#d4d0c9" stroke="#111" stroke-width="1.2"/>
<path d="M972 934H983L989 945L983 957H972L966 945Z" fill="#2c2c2c"/><path d="M974.5 942L980.5 948M980.5 942L974.5 948" stroke="#fff" stroke-width="2"/>
<rect x="993.5" y="933" width="23" height="24" rx="2" fill="#ffc83a" stroke="#222"/><path d="M997 954L999 946L1001 951L1004 941L1006 948L1009 938L1011 945L1013 936" fill="none" stroke="#a85a10" stroke-width="1.6"/>
<text x="1032" y="949" font-size="10" fill="#333" text-anchor="middle" font-weight="bold" style="font-family:'Liberation Mono',monospace">MAX</text>
<rect x="1049" y="933" width="24" height="24" fill="#4f7fe0" stroke="#1a3a9a"/>
<g fill="#9bbcf2" stroke="#1a3a9a" stroke-width=".7"><circle cx="1053" cy="937" r="3"/><circle cx="1060" cy="937" r="3"/><circle cx="1067" cy="938" r="3"/><circle cx="1054" cy="945" r="3"/><circle cx="1062" cy="945" r="3"/><circle cx="1069" cy="946" r="3"/><circle cx="1053" cy="953" r="3"/><circle cx="1060" cy="953" r="3"/><circle cx="1068" cy="953" r="3"/></g>
<path d="M1092 943L1085 950Q1082 953 1086 955Q1090 956 1096 947" fill="none" stroke="#b8201c" stroke-width="3.6"/>
<circle cx="1094" cy="937" r="3.2" fill="none" stroke="#333"/><circle cx="1094" cy="937" r="1" fill="#333"/>

<!-- grasshopper status -->
<rect x="960" y="959" width="953" height="19" fill="#f4f4f4"/>
<circle cx="972" cy="971" r="7.5" fill="#2a6ec8" stroke="#123a7a"/><circle cx="972" cy="970" r="3" fill="#e8f0fb"/>
<text x="983" y="978" class="st">Autosave complete (18 seconds ago)</text>
<text x="1839.6" y="978" class="st" style="fill:#666">0.9.0076</text>
</svg>
</body></html>
